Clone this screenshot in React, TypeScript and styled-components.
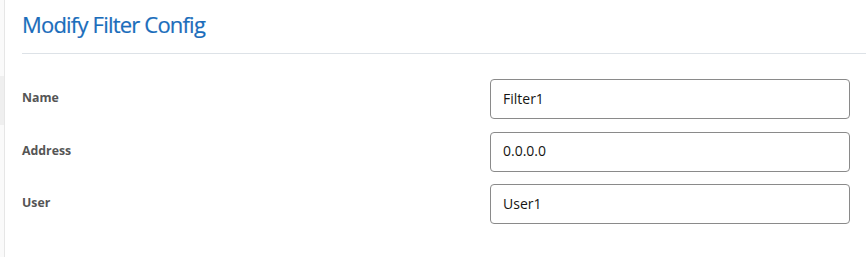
import React from 'react';
import styled, { createGlobalStyle } from 'styled-components';

const GlobalStyle = createGlobalStyle`
  html, body {
    margin: 0;
    padding: 0;
    background: #ffffff;
  }
  body {
    font-family: "Open Sans", "Noto Sans", sans-serif;
  }
`;

const Page = styled.div`
  display: flex;
  width: 866px;
  height: 257px;
  overflow: hidden;
`;

const SideRail = styled.div`
  width: 4px;
  flex-shrink: 0;
  background: #fafafa;
  border-right: 1px solid #e6e6e6;
  padding-top: 76px;
`;

const RailItem = styled.div<{ active?: boolean }>`
  height: 49px;
  background: ${(p) => (p.active ? '#efefef' : 'transparent')};
`;

const Main = styled.div`
  flex: 1;
  padding-left: 17px;
`;

const Header = styled.div`
  height: 53px;
  border-bottom: 1px solid #dde2e7;
  display: flex;
  align-items: flex-start;
`;

const Title = styled.h1`
  margin: 0;
  padding-top: 9px;
  font-size: 22px;
  font-weight: 400;
  color: #1a6dbb;
  letter-spacing: -0.8px;
  -webkit-text-stroke: 0.2px #1a6dbb;
`;

const Form = styled.div`
  display: flex;
  flex-direction: column;
  gap: 12.5px;
  padding: 25px 16px 0 0;
`;

const Row = styled.div`
  display: grid;
  grid-template-columns: 1fr 360px;
  align-items: center;
`;

const Label = styled.label`
  font-size: 12.3px;
  font-weight: 700;
  color: #555555;
  margin-top: -3px;
`;

const Field = styled.input`
  box-sizing: border-box;
  width: 360px;
  height: 40px;
  padding: 0 12px 2px;
  border: 1px solid #8a8a8a;
  border-radius: 4px;
  font-family: "Open Sans", "Noto Sans", sans-serif;
  font-size: 14px;
  color: #161513;
  background: #ffffff;
  outline: none;
`;

const fields = [
  { label: 'Name', value: 'Filter1' },
  { label: 'Address', value: '0.0.0.0' },
  { label: 'User', value: 'User1' },
];

const App = () => {
  return (
    <Page>
      <GlobalStyle />
      <SideRail>
        <RailItem active />
      </SideRail>
      <Main>
        <Header>
          <Title>Modify Filter Config</Title>
        </Header>
        <Form>
          {fields.map((f) => (
            <Row key={f.label}>
              <Label>{f.label}</Label>
              <Field defaultValue={f.value} readOnly />
            </Row>
          ))}
        </Form>
      </Main>
    </Page>
  );
};

export default App;
